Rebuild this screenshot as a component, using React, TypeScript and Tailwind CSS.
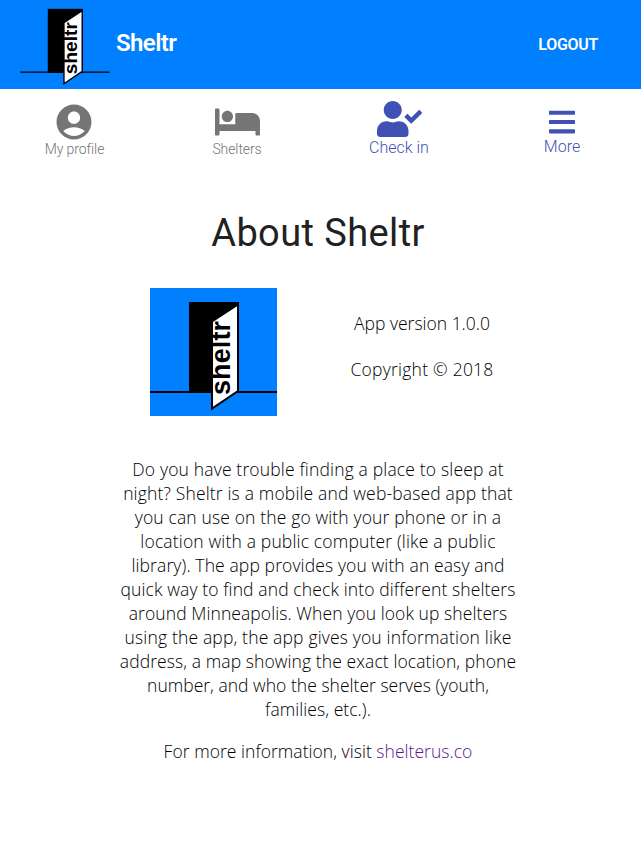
import { FaBars, FaBed, FaUserCheck } from "react-icons/fa";
import { MdAccountCircle } from "react-icons/md";

function Logo({ className }: { className: string }) {
  return (
    <svg viewBox="0 0 127 128" className={className} role="img" aria-label="sheltr">
      <rect width="127" height="128" fill="#0080ff" />
      <path d="M0 104H127" stroke="#000" strokeWidth="2" />
      <rect x="39" y="14" width="50" height="91" />
      <path d="M62 33.5L88 16.5V103L62 120.5Z" fill="#fff" stroke="#000" strokeWidth="2" />
      <text
        transform="translate(80.3 107) rotate(-90)"
        fontFamily="'Liberation Sans', Arial, sans-serif"
        fontWeight="700"
        fontSize="27"
        textLength="74"
      >
        sheltr
      </text>
    </svg>
  );
}

const aboutLines = [
  { text: "Do you have trouble finding a place to sleep at", tracking: "tracking-[0.16px]" },
  { text: "night? Sheltr is a mobile and web-based app that", tracking: "tracking-[0.16px]" },
  { text: "you can use on the go with your phone or in a", tracking: "tracking-[0.14px]" },
  { text: "location with a public computer (like a public", tracking: "tracking-[0.16px]" },
  { text: "library). The app provides you with an easy and", tracking: "tracking-[0.12px]" },
  { text: "quick way to find and check into different shelters", tracking: "tracking-[0.12px]" },
  { text: "around Minneapolis. When you look up shelters", tracking: "tracking-[0.08px]" },
  { text: "using the app, the app gives you information like", tracking: "tracking-[0.16px]" },
  { text: "address, a map showing the exact location, phone", tracking: "tracking-[0.09px]" },
  { text: "number, and who the shelter serves (youth,", tracking: "tracking-[0.02px]" },
  { text: "families, etc.).", tracking: "tracking-[0.06px]" },
];

export default function App() {
  return (
    <div className="min-h-[850px] w-[641px] overflow-hidden bg-white font-['Roboto',sans-serif]">
      <header className="flex h-[89px] items-start bg-[#0080ff] pr-[43px] pl-5 text-white">
        <Logo className="-mt-px h-[90px] w-[90px] shrink-0" />
        <h1 className="mt-[27px] ml-[6px] text-[24px] leading-8 font-semibold tracking-[-0.6px]">Sheltr</h1>
        <button className="mt-[33px] ml-auto text-[16px] leading-6 font-semibold tracking-[-0.3px]">LOGOUT</button>
      </header>

      <nav className="flex h-[77px] pl-[45px]">
        <a className="flex w-[59px] flex-col items-center text-[#757575]">
          <MdAccountCircle className="mt-[12px] -ml-px size-[42px] shrink-0" />
          <span className="-mt-[4px] text-[14px] leading-5 font-light tracking-[-0.1px] whitespace-nowrap">
            My profile
          </span>
        </a>
        <a className="ml-[108px] flex w-[50px] flex-col items-center text-[#757575]">
          <FaBed className="mt-[15px] h-[36px] w-[45px] shrink-0" />
          <span className="-mt-px text-[14px] leading-5 font-light tracking-[-0.1px] whitespace-nowrap">Shelters</span>
        </a>
        <a className="ml-[107px] flex w-[60px] flex-col items-center text-[#3f51b5]">
          <FaUserCheck className="mt-[12px] h-[36px] w-[45px] shrink-0" />
          <span className="text-[16px] leading-[22px] font-light whitespace-nowrap">Check in</span>
        </a>
        <a className="ml-[115px] flex w-[36px] flex-col items-center text-[#3f51b5]">
          <FaBars className="mt-[18px] h-[30px] w-[26px] shrink-0" />
          <span className="text-[16px] leading-5 font-light whitespace-nowrap">More</span>
        </a>
      </nav>

      <main className="flex flex-col pr-[5px] font-['Open_Sans',sans-serif] text-[17.5px] leading-6 font-light text-black">
        <h2 className="mt-[43px] text-center font-['Roboto',sans-serif] text-[38px] leading-12 font-normal tracking-[0.4px] text-[#212121]">
          About Sheltr
        </h2>
        <div className="mt-[31px] flex pl-[150px]">
          <Logo className="h-[128px] w-[127px] shrink-0" />
          <div className="ml-[65px] flex w-[160px] flex-col items-center gap-[22px] pt-[23px] whitespace-nowrap">
            <p>App version 1.0.0</p>
            <p className="tracking-[0.25px]">Copyright © 2018</p>
          </div>
        </div>
        <p className="mt-[41px] text-center whitespace-nowrap">
          {aboutLines.map(({ text, tracking }) => (
            <span key={text} className={`block ${tracking}`}>
              {text}
            </span>
          ))}
        </p>
        <p className="mt-[18px] text-center tracking-[0.04px]">
          For more information, visit <a className="text-[#551a8b]">shelterus.co</a>
        </p>
      </main>
    </div>
  );
}
